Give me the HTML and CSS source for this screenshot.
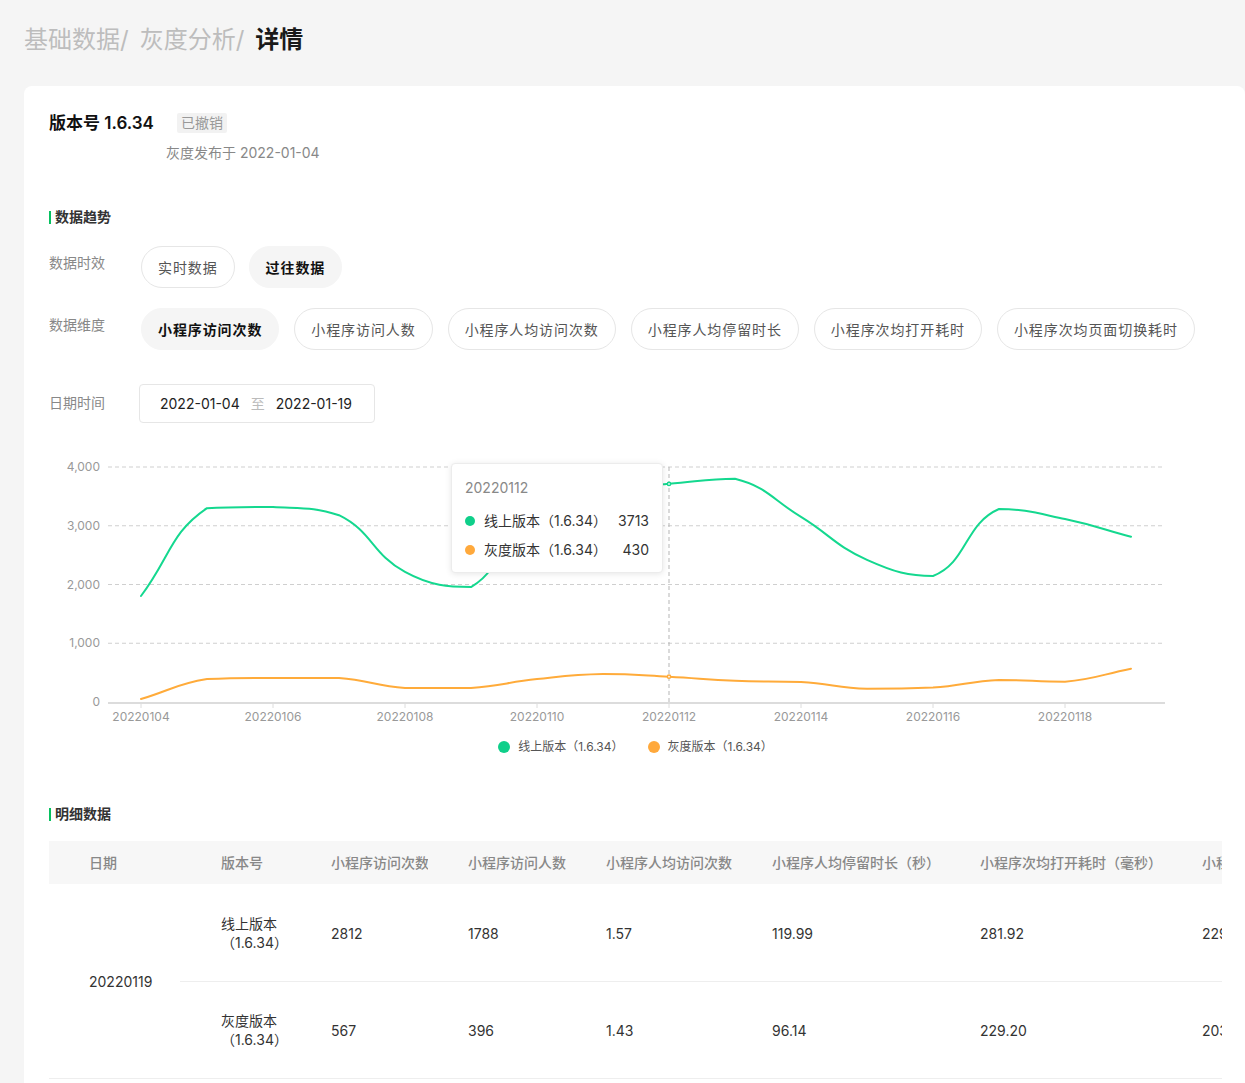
FILE: index.html
```html
<!DOCTYPE html>
<html lang="zh-CN">
<head>
<meta charset="utf-8">
<title>灰度分析 详情</title>
<link rel="stylesheet" href="styles.css">
</head>
<body>
<div class="page">
  <div class="breadcrumb">
    <span class="crumb">基础数据/</span>
    <span class="crumb">灰度分析/</span>
    <span class="current">详情</span>
  </div>

  <div class="card">
    <div class="version">
      <div class="version-head">
        <h1 class="version-title">版本号 1.6.34</h1>
        <span class="badge">已撤销</span>
      </div>
      <div class="version-sub">灰度发布于 2022-01-04</div>
    </div>

    <section class="trend">
      <h2 class="section-title">数据趋势</h2>

      <div class="filter-row first">
        <div class="filter-label">数据时效</div>
        <div class="pills pills-tight">
          <span class="pill">实时数据</span>
          <span class="pill active">过往数据</span>
        </div>
      </div>

      <div class="filter-row second">
        <div class="filter-label">数据维度</div>
        <div class="pills">
          <span class="pill active">小程序访问次数</span>
          <span class="pill">小程序访问人数</span>
          <span class="pill">小程序人均访问次数</span>
          <span class="pill">小程序人均停留时长</span>
          <span class="pill">小程序次均打开耗时</span>
          <span class="pill">小程序次均页面切换耗时</span>
        </div>
      </div>

      <div class="filter-row date">
        <div class="filter-label">日期时间</div>
        <div class="date-box">
          <span>2022-01-04</span>
          <span class="date-sep">至</span>
          <span>2022-01-19</span>
        </div>
      </div>

      <div class="chart">
        <svg class="chart-svg" width="1173" height="275" viewBox="0 0 1173 275">
          <g class="grid">
            <line x1="59" x2="1116" y1="12" y2="12"/>
            <line x1="59" x2="1116" y1="70.75" y2="70.75"/>
            <line x1="59" x2="1116" y1="129.5" y2="129.5"/>
            <line x1="59" x2="1116" y1="188.25" y2="188.25"/>
          </g>
          <line class="axis" x1="59" x2="1116" y1="248" y2="248"/>
          <g class="ticks">
            <line x1="92" x2="92" y1="249" y2="253"/>
            <line x1="224" x2="224" y1="249" y2="253"/>
            <line x1="356" x2="356" y1="249" y2="253"/>
            <line x1="488" x2="488" y1="249" y2="253"/>
            <line x1="620" x2="620" y1="249" y2="253"/>
            <line x1="752" x2="752" y1="249" y2="253"/>
            <line x1="884" x2="884" y1="249" y2="253"/>
            <line x1="1016" x2="1016" y1="249" y2="253"/>
          </g>
          <g class="y-labels">
            <text x="51" y="13">4,000</text>
            <text x="51" y="72">3,000</text>
            <text x="51" y="131">2,000</text>
            <text x="51" y="189">1,000</text>
            <text x="51" y="248">0</text>
          </g>
          <g class="x-labels">
            <text x="92" y="263">20220104</text>
            <text x="224" y="263">20220106</text>
            <text x="356" y="263">20220108</text>
            <text x="488" y="263">20220110</text>
            <text x="620" y="263">20220112</text>
            <text x="752" y="263">20220114</text>
            <text x="884" y="263">20220116</text>
            <text x="1016" y="263">20220118</text>
          </g>
          <line class="crosshair" x1="620" x2="620" y1="12" y2="248"/>
          <path id="line-gray" class="line line-gray" d=""/>
          <path id="line-online" class="line line-online" d=""/>
          <circle class="hover-dot online" cx="620" cy="28.9" r="1.6"/>
          <circle class="hover-dot gray" cx="620" cy="221.7" r="1.6"/>
        </svg>

        <div class="tooltip">
          <div class="tooltip-title">20220112</div>
          <div class="tooltip-row">
            <span class="dot dot-online"></span>
            <span class="tooltip-name">线上版本（1.6.34）</span>
            <span class="tooltip-value">3713</span>
          </div>
          <div class="tooltip-row">
            <span class="dot dot-gray"></span>
            <span class="tooltip-name">灰度版本（1.6.34）</span>
            <span class="tooltip-value">430</span>
          </div>
        </div>
      </div>

      <div class="legend">
        <span class="legend-item"><span class="legend-dot dot-online"></span>线上版本（1.6.34）</span>
        <span class="legend-item"><span class="legend-dot dot-gray"></span>灰度版本（1.6.34）</span>
      </div>
    </section>

    <section class="detail">
      <h2 class="section-title">明细数据</h2>
      <div class="table-wrap">
        <table class="data-table">
          <colgroup>
            <col class="c-date">
            <col class="c-ver">
            <col class="c-a">
            <col class="c-b">
            <col class="c-c">
            <col class="c-d">
            <col class="c-e">
            <col class="c-f">
          </colgroup>
          <thead>
            <tr>
              <th>日期</th>
              <th class="ver">版本号</th>
              <th>小程序访问次数</th>
              <th>小程序访问人数</th>
              <th>小程序人均访问次数</th>
              <th>小程序人均停留时长（秒）</th>
              <th>小程序次均打开耗时（毫秒）</th>
              <th>小程序次均页面切换耗时（毫秒）</th>
            </tr>
          </thead>
          <tbody>
            <tr>
              <td rowspan="2" class="date-cell">20220119</td>
              <td class="ver">线上版本（1.6.34）</td>
              <td>2812</td>
              <td>1788</td>
              <td>1.57</td>
              <td>119.99</td>
              <td>281.92</td>
              <td>229.87</td>
            </tr>
            <tr>
              <td class="ver">灰度版本（1.6.34）</td>
              <td>567</td>
              <td>396</td>
              <td>1.43</td>
              <td>96.14</td>
              <td>229.20</td>
              <td>203.45</td>
            </tr>
          </tbody>
        </table>
      </div>
    </section>
  </div>
</div>
<script src="chart.js"></script>
</body>
</html>
```

FILE: styles.css
```css
* {
  box-sizing: border-box;
  margin: 0;
  padding: 0;
}

html {
  overflow: hidden;
  background: #f5f5f5;
}

body {
  font-family: Inter, "Noto Sans CJK SC", "Noto Sans", sans-serif;
  font-size: 14px;
  line-height: 20px;
  color: #333;
}

.page {
  width: 1245px;
  padding: 23px 0 0 24px;
}

/* breadcrumb */
.breadcrumb {
  display: flex;
  gap: 11px;
  height: 33px;
  font-size: 24px;
  line-height: 34px;
  color: #bdbdbd;
}

.breadcrumb .current {
  color: #1a1a1a;
  font-weight: 700;
}

/* card */
.card {
  margin-top: 30px;
  width: 1221px;
  background: #fff;
  border-radius: 8px 8px 0 0;
  padding: 25px 23px 80px 25px;
}

.version-head {
  display: flex;
  align-items: center;
  height: 24px;
}

.version-title {
  font-size: 17px;
  line-height: 24px;
  font-weight: 600;
  color: #111;
}

.badge {
  margin-left: 23px;
  height: 20px;
  line-height: 20px;
  padding: 0 4px;
  background: #f2f2f2;
  color: #999;
  font-size: 14px;
  border-radius: 2px;
}

.version-sub {
  margin-top: 8px;
  padding-left: 117px;
  color: #888;
}

/* section titles */
.section-title {
  display: flex;
  align-items: center;
  font-size: 14px;
  line-height: 20px;
  font-weight: 700;
  color: #333;
}

.section-title::before {
  content: "";
  width: 2px;
  height: 13px;
  margin-right: 4px;
  background: #07c160;
}

.trend {
  margin-top: 44px;
}

/* filters */
.filter-row {
  display: flex;
  align-items: flex-start;
}

.filter-row.first {
  margin-top: 19px;
}

.filter-row.second {
  margin-top: 20px;
}

.filter-row.date {
  margin-top: 34px;
}

.filter-label {
  flex: none;
  width: 92px;
  padding-top: 7px;
  color: #888;
}

.filter-row.date .filter-label {
  width: 90px;
  padding-top: 9px;
}

.pills {
  display: flex;
  gap: 15px;
}

.pills-tight {
  gap: 14px;
}

.pill {
  height: 42px;
  line-height: 41px;
  padding: 0 16px;
  border: 1px solid #e6e6e6;
  border-radius: 21px;
  font-size: 14px;
  letter-spacing: 0.9px;
  color: #555;
  white-space: nowrap;
}

.pill.active {
  background: #f5f5f5;
  border-color: #f5f5f5;
  color: #111;
  font-weight: 600;
}

.date-box {
  display: flex;
  align-items: center;
  width: 236px;
  height: 39px;
  padding-left: 20px;
  border: 1px solid #e6e6e6;
  border-radius: 4px;
  color: #222;
}

.date-sep {
  margin: 0 11px;
  color: #bbb;
}

/* chart */
.chart {
  position: relative;
  margin-top: 32px;
  height: 275px;
}

.chart-svg {
  display: block;
}

.grid line {
  stroke: #cfcfcf;
  stroke-width: 1;
  stroke-dasharray: 4 3;
}

.axis {
  stroke: #dcdcdc;
  stroke-width: 2;
}

.ticks line {
  stroke: #dcdcdc;
  stroke-width: 1;
}

.y-labels text {
  font-family: Inter, "Noto Sans", sans-serif;
  font-size: 12px;
  fill: #999;
  text-anchor: end;
  dominant-baseline: middle;
}

.x-labels text {
  font-family: Inter, "Noto Sans", sans-serif;
  font-size: 12px;
  fill: #999;
  text-anchor: middle;
  dominant-baseline: middle;
}

.crosshair {
  stroke: #b5b5b5;
  stroke-width: 1;
  stroke-dasharray: 4 3;
}

.line {
  fill: none;
  stroke-width: 2;
  stroke-linejoin: round;
  stroke-linecap: round;
}

.line-online {
  stroke: #14d88f;
}

.line-gray {
  stroke: #ffab3a;
}

.hover-dot {
  stroke-width: 1.5;
  fill: #fff;
}

.hover-dot.online {
  stroke: #14d88f;
}

.hover-dot.gray {
  stroke: #ffab3a;
}

.tooltip {
  position: absolute;
  left: 402px;
  top: 8px;
  width: 212px;
  height: 110px;
  padding: 14px 13px 0 13px;
  background: #fff;
  border: 1px solid #ececec;
  border-radius: 4px;
  box-shadow: 0 1px 6px rgba(0, 0, 0, 0.1);
}

.tooltip-title {
  color: #888;
  line-height: 20px;
  margin-bottom: 8px;
}

.tooltip-row {
  display: flex;
  align-items: center;
  height: 29px;
  color: #333;
}

.dot {
  flex: none;
  width: 10px;
  height: 10px;
  border-radius: 50%;
  margin-right: 9px;
}

.dot-online {
  background: #0fcf8a;
}

.dot-gray {
  background: #ffa93c;
}

.tooltip-name {
  flex: 1;
}

.tooltip-value {
  text-align: right;
}

/* legend */
.legend {
  display: flex;
  justify-content: center;
  gap: 24px;
  margin-top: 7px;
  font-size: 12px;
  line-height: 20px;
  color: #555;
}

.legend-item {
  display: flex;
  align-items: center;
}

.legend-dot {
  width: 12px;
  height: 12px;
  border-radius: 50%;
  margin-right: 8px;
}

/* table */
.detail {
  margin-top: 47px;
}

.table-wrap {
  margin-top: 17px;
  width: 1173px;
  overflow: hidden;
}

.data-table {
  width: 1373px;
  table-layout: fixed;
  border-collapse: collapse;
  font-size: 14px;
}

.c-date { width: 131px; }
.c-ver { width: 111px; }
.c-a { width: 137px; }
.c-b { width: 138px; }
.c-c { width: 166px; }
.c-d { width: 208px; }
.c-e { width: 222px; }
.c-f { width: 260px; }

.data-table th {
  height: 43px;
  padding-left: 40px;
  background: #f7f7f7;
  text-align: left;
  font-weight: 500;
  color: #888;
  white-space: nowrap;
  overflow: hidden;
}

.data-table td {
  height: 97px;
  padding-top: 3px;
  padding-left: 40px;
  text-align: left;
  vertical-align: middle;
  color: #333;
  border-bottom: 1px solid #eee;
  white-space: nowrap;
}

.data-table .ver {
  padding-left: 41px;
  padding-right: 0;
}

.data-table td.ver {
  padding-top: 1px;
  white-space: normal;
  line-height: 19px;
}
```

FILE: chart.js
```js
(function () {
  var X0 = 92, DX = 66, Y0 = 247, K = 0.05875, SMOOTH = 0.45;
  var series = {
    'line-online': [1804, 3300, 3320, 3180, 2213, 1957, 3500, 3620, 3713, 3800, 3150, 2420, 2145, 3285, 3115, 2812],
    'line-gray': [50, 390, 410, 410, 240, 240, 390, 475, 430, 360, 340, 225, 245, 375, 345, 567]
  };

  function clamp(v, a, b) {
    var lo = Math.min(a, b), hi = Math.max(a, b);
    return Math.max(lo, Math.min(hi, v));
  }

  function smoothPath(vals) {
    var p = vals.map(function (v, i) { return [X0 + DX * i, Y0 - v * K]; });
    var cps = p.map(function (cur, i) {
      var prev = p[i - 1] || cur;
      var next = p[i + 1] || cur;
      var vx = next[0] - prev[0], vy = next[1] - prev[1];
      var d0 = Math.hypot(cur[0] - prev[0], cur[1] - prev[1]);
      var d1 = Math.hypot(next[0] - cur[0], next[1] - cur[1]);
      var sum = d0 + d1 || 1;
      var rn = d1 / sum;
      var rp = 1 - rn;
      var inCp = [cur[0] - vx * SMOOTH * rp, cur[1] - vy * SMOOTH * rp];
      var outCp = [cur[0] + vx * SMOOTH * rn, cur[1] + vy * SMOOTH * rn];
      inCp[1] = clamp(inCp[1], prev[1], cur[1]);
      outCp[1] = clamp(outCp[1], cur[1], next[1]);
      return { inCp: inCp, outCp: outCp };
    });
    var d = 'M' + p[0][0] + ',' + p[0][1].toFixed(2);
    for (var i = 0; i < p.length - 1; i++) {
      var c1 = cps[i].outCp, c2 = cps[i + 1].inCp, e = p[i + 1];
      d += ' C' + c1[0].toFixed(2) + ',' + c1[1].toFixed(2) + ' ' +
        c2[0].toFixed(2) + ',' + c2[1].toFixed(2) + ' ' +
        e[0].toFixed(2) + ',' + e[1].toFixed(2);
    }
    return d;
  }

  Object.keys(series).forEach(function (id) {
    var el = document.getElementById(id);
    if (el) el.setAttribute('d', smoothPath(series[id]));
  });
})();
```
